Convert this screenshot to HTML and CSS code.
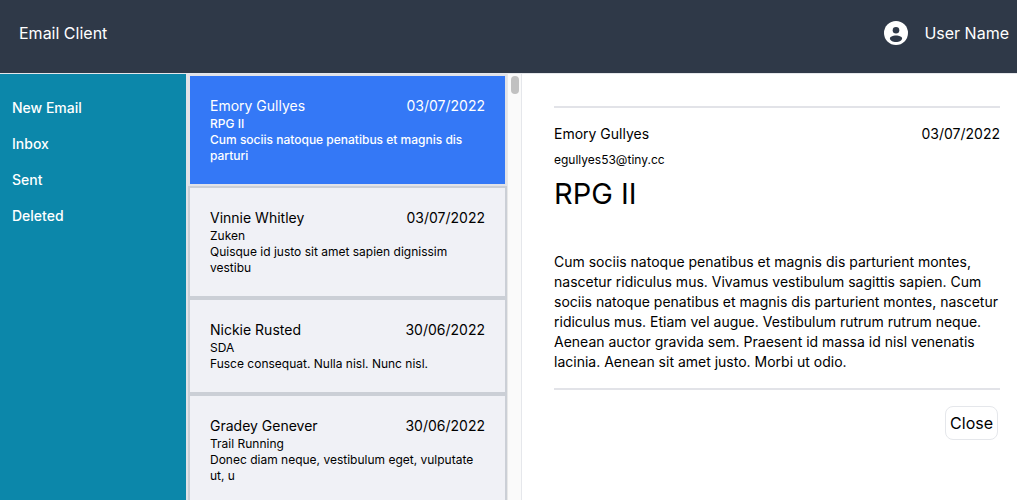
FILE: index.html
```html
<!DOCTYPE html>
<html lang="en">
<head>
<meta charset="utf-8">
<meta name="viewport" content="width=device-width, initial-scale=1">
<title>Email Client</title>
<link rel="stylesheet" href="styles.css">
</head>
<body>
<div class="app">
  <header class="topbar">
    <span class="brand">Email Client</span>
    <div class="user">
      <svg class="avatar" viewBox="0 0 24 24" aria-hidden="true">
        <circle cx="12" cy="12" r="12" fill="#fff"/>
        <circle cx="12" cy="9.2" r="3.3" fill="#2f3948"/>
        <path d="M12 14.6c-3.3 0-6.1 1.4-6.1 2.9 0 1.9 2.9 3.5 6.1 3.5s6.1-1.6 6.1-3.5c0-1.5-2.8-2.9-6.1-2.9z" fill="#2f3948"/>
      </svg>
      <span>User Name</span>
    </div>
  </header>
  <div class="columns">
    <nav class="sidebar">
      <a href="#new">New Email</a>
      <a href="#inbox">Inbox</a>
      <a href="#sent">Sent</a>
      <a href="#deleted">Deleted</a>
    </nav>
    <section class="inbox" aria-label="Messages">
      <div class="messages">
        <article class="message selected">
          <div class="row"><span>Emory Gullyes</span><time>03/07/2022</time></div>
          <p>RPG II</p>
          <p>Cum sociis natoque penatibus et magnis dis parturi</p>
        </article>
        <article class="message">
          <div class="row"><span>Vinnie Whitley</span><time>03/07/2022</time></div>
          <p>Zuken</p>
          <p>Quisque id justo sit amet sapien dignissim vestibu</p>
        </article>
        <article class="message">
          <div class="row"><span>Nickie Rusted</span><time>30/06/2022</time></div>
          <p>SDA</p>
          <p>Fusce consequat. Nulla nisl. Nunc nisl.</p>
        </article>
        <article class="message">
          <div class="row"><span>Gradey Genever</span><time>30/06/2022</time></div>
          <p>Trail Running</p>
          <p>Donec diam neque, vestibulum eget, vulputate ut, u</p>
        </article>
      </div>
      <div class="track"><div class="thumb"></div></div>
    </section>
    <main class="detail">
      <article class="mail">
        <div class="row"><span>Emory Gullyes</span><time>03/07/2022</time></div>
        <p class="address">egullyes53@tiny.cc</p>
        <h1>RPG II</h1>
        <p class="body">Cum sociis natoque penatibus et magnis dis parturient montes, nascetur ridiculus mus. Vivamus vestibulum sagittis sapien. Cum sociis natoque penatibus et magnis dis parturient montes, nascetur ridiculus mus. Etiam vel augue. Vestibulum rutrum rutrum neque. Aenean auctor gravida sem. Praesent id massa id nisl venenatis lacinia. Aenean sit amet justo. Morbi ut odio.</p>
      </article>
      <div class="actions"><button class="close" type="button">Close</button></div>
    </main>
  </div>
</div>
</body>
</html>
```
FILE: styles.css
```css
* {
  box-sizing: border-box;
}

body,
p,
h1 {
  margin: 0;
}

body {
  font-family: Inter, Roboto, sans-serif;
  font-size: 14px;
  line-height: 20px;
  color: #000;
  background: #fff;
}

.app {
  display: flex;
  flex-direction: column;
  height: 100vh;
  overflow: hidden;
}

.topbar {
  display: flex;
  justify-content: space-between;
  align-items: center;
  padding: 21px 8px 28px 19px;
  border-bottom: 1px solid #e5e7eb;
  background: #2f3948;
  color: #fff;
  font-size: 16px;
  line-height: 24px;
}

.user {
  display: flex;
  align-items: center;
  gap: 16px;
}

.avatar {
  width: 24px;
  height: 24px;
}

.columns {
  display: grid;
  grid-template-columns: 186px 336px 1fr;
  flex: 1;
  min-height: 0;
}

.sidebar {
  display: flex;
  flex-direction: column;
  gap: 16px;
  padding: 24px 12px;
  background: #0c87aa;
}

.sidebar a {
  color: #fff;
  font-weight: 500;
  text-decoration: none;
}

.inbox {
  display: flex;
  min-height: 0;
  overflow: hidden;
  border-left: 2px solid #e2e3e8;
  border-right: 1px solid #e5e7eb;
}

.messages {
  flex: 1;
}

.message {
  padding: 20px;
  border: 2px solid #cbcfd6;
  background: #f0f1f6;
}

.message.selected {
  border-color: #e2e3e8;
  background: #3478f6;
  color: #fff;
}

.message.selected p {
  font-weight: 500;
}

.message p {
  font-size: 12px;
  line-height: 16px;
}

.row {
  display: flex;
  justify-content: space-between;
}

.track {
  width: 14px;
  padding: 2px 2px 2px 3px;
  border-left: 1px solid #e8e8e8;
  background: #fafafa;
}

.thumb {
  height: 18px;
  border-radius: 4px;
  background: #c1c1c1;
}

.detail {
  padding: 32px 17px 32px 32px;
}

.mail {
  padding: 16px 0;
  border-top: 2px solid #e2e3e8;
  border-bottom: 2px solid #e2e3e8;
}

.address {
  margin-top: 8px;
  font-size: 12px;
  line-height: 16px;
}

.mail h1 {
  margin: 8px 0 40px;
  font-size: 29px;
  font-weight: 400;
  line-height: 36px;
}

.actions {
  display: flex;
  justify-content: flex-end;
  padding: 16px 2px;
}

.close {
  padding: 4px;
  border: 1px solid #e5e7eb;
  border-radius: 8px;
  background: #fff;
  color: #000;
  font-family: inherit;
  font-size: 16px;
  line-height: 24px;
}
```
